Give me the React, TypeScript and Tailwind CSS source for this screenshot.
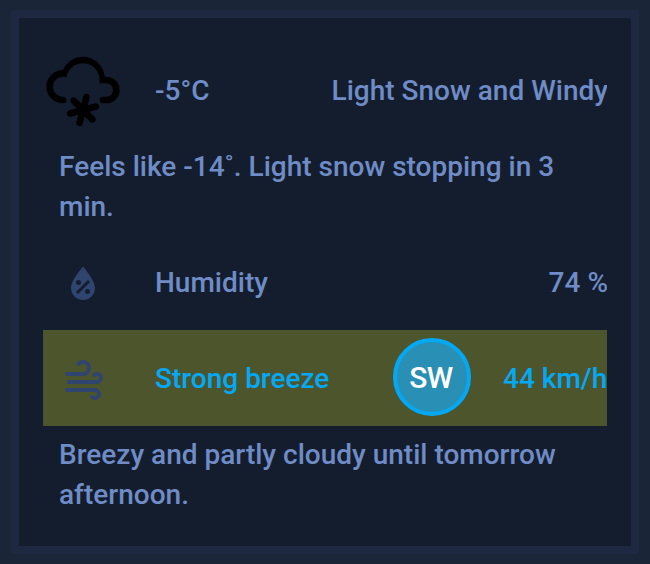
import type { ReactNode } from 'react';

const SNOWY =
  'M6,14A1,1 0 0,1 7,15A1,1 0 0,1 6,16A5,5 0 0,1 1,11A5,5 0 0,1 6,6C7,3.65 9.3,2 12,2C15.43,2 18.24,4.66 18.5,8.03L19,8A4,4 0 0,1 23,12A4,4 0 0,1 19,16H18A1,1 0 0,1 17,15A1,1 0 0,1 18,14H19A2,2 0 0,0 21,12A2,2 0 0,0 19,10H17V9A5,5 0 0,0 12,4C9.5,4 7.45,5.82 7.06,8.19C6.73,8.07 6.37,8 6,8A3,3 0 0,0 3,11A3,3 0 0,0 6,14M7.88,18.07L10.07,17.5L8.46,15.88C8.07,15.5 8.07,14.86 8.46,14.46C8.85,14.07 9.5,14.07 9.88,14.46L11.5,16.07L12.07,13.88C12.21,13.34 12.76,13.03 13.29,13.17C13.83,13.31 14.14,13.86 14,14.4L13.41,16.59L15.6,16C16.14,15.86 16.69,16.17 16.83,16.71C16.97,17.24 16.66,17.79 16.12,17.93L13.93,18.5L15.54,20.12C15.93,20.5 15.93,21.15 15.54,21.54C15.15,21.93 14.5,21.93 14.12,21.54L12.5,19.93L11.93,22.12C11.79,22.66 11.24,22.97 10.71,22.83C10.17,22.69 9.86,22.14 10,21.6L10.59,19.41L8.4,20C7.86,20.14 7.31,19.83 7.17,19.29C7.03,18.76 7.34,18.21 7.88,18.07Z';
const HUMIDITY =
  'M12,3.25C12,3.25 6,10 6,14C6,17.32 8.69,20 12,20A6,6 0 0,0 18,14C18,10 12,3.25 12,3.25M14.47,9.97L15.53,11.03L9.53,17.03L8.47,15.97M9.75,10A1.25,1.25 0 0,1 11,11.25A1.25,1.25 0 0,1 9.75,12.5A1.25,1.25 0 0,1 8.5,11.25A1.25,1.25 0 0,1 9.75,10M14.25,14.5A1.25,1.25 0 0,1 15.5,15.75A1.25,1.25 0 0,1 14.25,17A1.25,1.25 0 0,1 13,15.75A1.25,1.25 0 0,1 14.25,14.5Z';
const WINDY =
  'M4,10A1,1 0 0,1 3,9A1,1 0 0,1 4,8H12A2,2 0 0,0 14,6A2,2 0 0,0 12,4C11.45,4 10.95,4.22 10.59,4.59C10.2,5 9.56,5 9.17,4.59C8.78,4.2 8.78,3.56 9.17,3.17C9.9,2.45 10.9,2 12,2A4,4 0 0,1 16,6A4,4 0 0,1 12,10H4M19,12A1,1 0 0,0 20,11A1,1 0 0,0 19,10C18.72,10 18.47,10.11 18.29,10.29C17.9,10.68 17.27,10.68 16.88,10.29C16.5,9.9 16.5,9.27 16.88,8.88C17.42,8.34 18.17,8 19,8A3,3 0 0,1 22,11A3,3 0 0,1 19,14H5A1,1 0 0,1 4,13A1,1 0 0,1 5,12H19M18,18H4A1,1 0 0,1 3,17A1,1 0 0,1 4,16H18A3,3 0 0,1 21,19A3,3 0 0,1 18,22C17.17,22 16.42,21.66 15.88,21.12C15.5,20.73 15.5,20.1 15.88,19.71C16.27,19.32 16.9,19.32 17.29,19.71C17.47,19.89 17.72,20 18,20A1,1 0 0,0 19,19A1,1 0 0,0 18,18Z';

function Icon({ path, className }: { path: string; className: string }) {
  return (
    <svg viewBox="0 0 24 24" fill="currentColor" className={className} aria-hidden="true">
      <path fillRule="evenodd" d={path} />
    </svg>
  );
}

function Row({ icon, children, className = '' }: { icon: ReactNode; children: ReactNode; className?: string }) {
  return (
    <div className={`flex h-24 items-center overflow-hidden ${className}`}>
      <div className="flex w-20 shrink-0 justify-center">{icon}</div>
      <div className="flex min-w-0 flex-1 items-center justify-between pl-8 whitespace-nowrap">{children}</div>
    </div>
  );
}

export default function App() {
  return (
    <div className="h-[564px] w-[650px] bg-[#1a2538] pt-[10px] pl-[11px] font-['Roboto',sans-serif] text-[28px] leading-10 font-medium text-[#6f8cc6]">
      <div className="h-[544px] w-[628px] rounded-[4px] border-8 border-[#1e2941] bg-[#141d2d] p-6">
        <Row icon={<Icon path={SNOWY} className="size-20 text-black" />}>
          <span className="pt-0.5">-5°C</span>
          <span className="-mr-px pt-0.5">Light Snow and Windy</span>
        </Row>
        <p className="px-4 pt-[9px] pb-[7px]">Feels like -14˚. Light snow stopping in 3 min.</p>
        <Row icon={<Icon path={HUMIDITY} className="mt-1 size-12 text-[#2f446e]" />}>
          <span className="pt-0.5">Humidity</span>
          <span className="-mr-px pt-0.5">74 %</span>
        </Row>
        <Row
          className="bg-[#4d552d] text-[#03a9f4]"
          icon={<Icon path={WINDY} className="mt-1 size-12 text-[#2f446e]" />}
        >
          <span className="w-[238px] shrink-0 pt-0.5">Strong breeze</span>
          <span className="mr-8 mb-0.5 flex size-[78px] shrink-0 items-center justify-center rounded-full border-4 border-[#03a9f4] bg-[#298fb4] pt-0.5 pr-0.5 text-[30px] tracking-[-0.5px] text-white">
            SW
          </span>
          <span className="w-[104px] shrink-0 pt-0.5">44 km/h</span>
        </Row>
        <p className="px-4 pt-[9px] pb-[7px]">Breezy and partly cloudy until tomorrow afternoon.</p>
      </div>
    </div>
  );
}
